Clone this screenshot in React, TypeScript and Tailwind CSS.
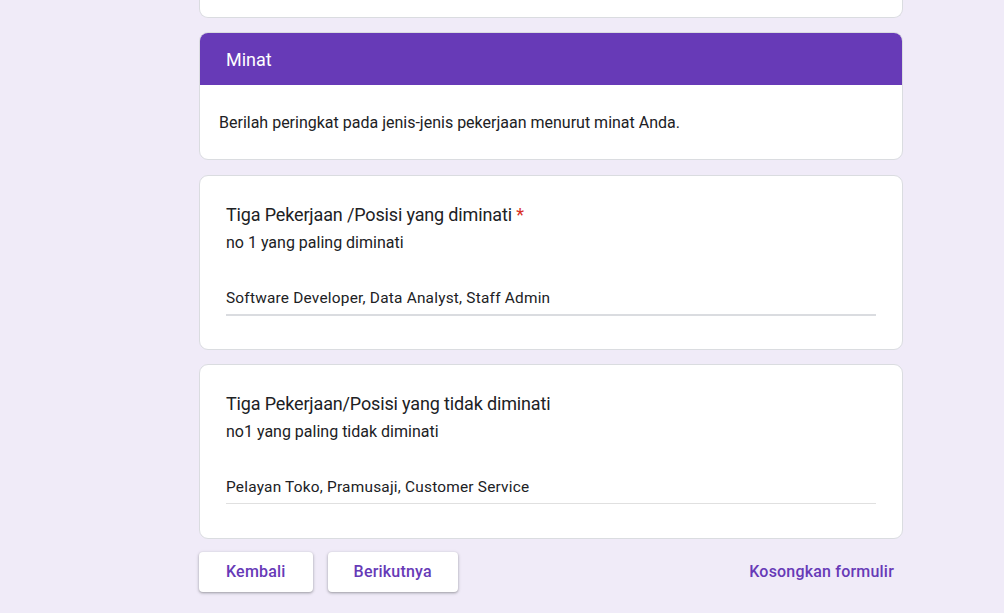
const font = { fontFamily: 'Roboto, "Noto Sans", Arial, sans-serif' };

const btnShadow = 'shadow-[0_1px_2px_rgba(60,64,67,0.3),0_1px_3px_1px_rgba(60,64,67,0.15)]';

function QuestionCard({
  title,
  required,
  help,
  answer,
  thick,
}: {
  title: string;
  required?: boolean;
  help: string;
  answer: string;
  thick?: boolean;
}) {
  return (
    <div className="bg-white rounded-[9px] border border-[#dadce0] px-[26px] pt-[26px] pb-[33px]">
      <div className="text-[18px] leading-[26px] tracking-[-0.15px] text-[#202124]">
        {title}
        {required && <span className="text-[#d93025]"> *</span>}
      </div>
      <div className="mt-[4px] text-[16px] leading-[22px] text-[#202124]">{help}</div>
      <div
        className={`mt-[33px] pb-[5px] text-[15.4px] leading-[22px] tracking-[0.22px] text-[#202124] ${
          thick ? 'border-b-2 border-[#dadce0]' : 'border-b border-[#e0e0e0] mb-px'
        }`}
      >
        {answer}
      </div>
    </div>
  );
}

export default function App() {
  return (
    <div className="min-h-[613px] bg-[#f0ebf8] overflow-hidden" style={font}>
      <div className="ml-[199px] w-[704px] flex flex-col gap-[14.3px]">
        <div className="h-[18px] bg-white rounded-b-[9px] border border-t-0 border-[#dadce0]" />

        <div className="bg-white rounded-[9px] border border-[#dadce0] overflow-hidden">
          <div className="h-[52px] bg-[#673ab7] flex items-center px-[26px] text-white text-[18px]">
            Minat
          </div>
          <div className="px-[19px] pt-[26px] pb-[24px] text-[16px] leading-6 text-[#202124]">
            Berilah peringkat pada jenis-jenis pekerjaan menurut minat Anda.
          </div>
        </div>

        <QuestionCard
          title="Tiga Pekerjaan /Posisi yang diminati"
          required
          help="no 1 yang paling diminati"
          answer="Software Developer, Data Analyst, Staff Admin"
          thick
        />
        <QuestionCard
          title="Tiga Pekerjaan/Posisi yang tidak diminati"
          help="no1 yang paling tidak diminati"
          answer="Pelayan Toko, Pramusaji, Customer Service"
        />

        <div className="-mt-[1px] flex items-center">
          <button
            className={`h-[39.6px] px-[27px] bg-white rounded-[4px] ${btnShadow} text-[16px] tracking-[0.2px] font-medium text-[#673ab7]`}
          >
            Kembali
          </button>
          <button
            className={`ml-[15px] h-[39.6px] px-[26px] bg-white rounded-[4px] ${btnShadow} text-[16px] tracking-[0.2px] font-medium text-[#673ab7]`}
          >
            Berikutnya
          </button>
          <button className="ml-auto mr-[9px] h-[39.6px] text-[16px] tracking-[0.2px] font-medium text-[#673ab7]">
            Kosongkan formulir
          </button>
        </div>
      </div>
    </div>
  );
}
